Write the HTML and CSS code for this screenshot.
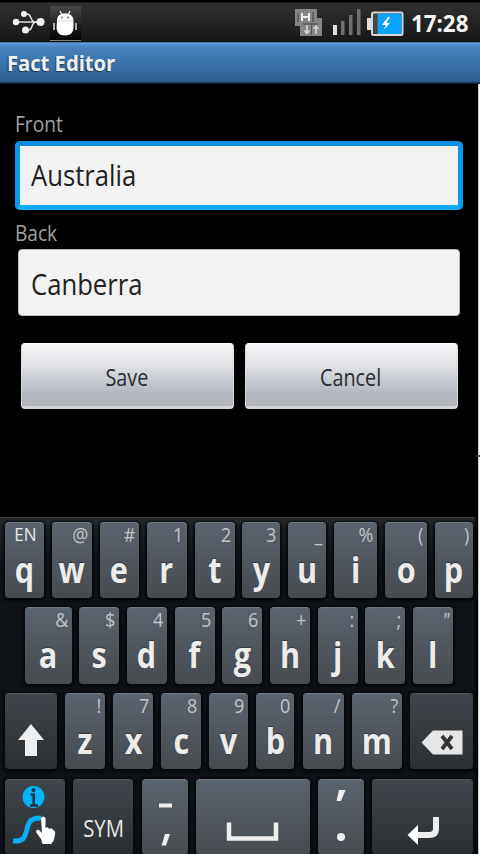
FILE: index.html
```html
<!DOCTYPE html>
<html lang="en">
<head>
<meta charset="utf-8">
<title>Fact Editor</title>
<link rel="stylesheet" href="styles.css">
</head>
<body>
<header class="status">
  <svg class="usb" width="34" height="26" viewBox="0 0 34 26">
    <g fill="none" stroke="#ddd" stroke-width="1.6"><path d="M4 13H30M13 5H16C21 5 18 10 23 13"/><path d="M14 21H18C22 21 20 13 25 13"/></g>
    <g fill="#f2f2f2"><circle cx="5" cy="13" r="3.2"/><circle cx="29.5" cy="13" r="4"/><circle cx="13" cy="5" r="3"/><circle cx="14.500" cy="21" r="3.500"/></g>
  </svg>
  <div class="debug">
    <svg width="30" height="32" viewBox="0 0 30 32">
      <g stroke="#eee" fill="#fff"><path d="M10 1L12 5M20 1L18 5" stroke-width="1.300"/><path d="M7 11C7 5.500 10 3.500 15 3.500S23.500 5.500 23.500 11V18Q23 25.500 15 25.500T6.500 18Z" stroke="none"/><path d="M4 13V20M26 13V20" stroke="#aaa" stroke-width="2"/></g>
      <path d="M7 11H23" stroke="#ddd"/><circle cx="12" cy="7.500" r="1" fill="#777"/><circle cx="18" cy="7.500" r="1" fill="#777"/>
    </svg>
  </div>
  <svg class="network" width="28" height="28" viewBox="0 0 28 28">
    <path d="M0 0H22V9H27V27H5V17H0Z" fill="#858585"/>
    <path d="M7 4V12M14 4V12M7 8H14" stroke="#eee" stroke-width="2"/>
    <path d="M3 4V13M18 3V13M8 15H23" stroke="#555" stroke-width="1.500"/>
    <path d="M12 16V24M9.500 21.500L12 24.500L14.500 21.500M21 25V17M18.500 20L21 17L23.500 20" fill="none" stroke="#d0d0d0" stroke-width="1.700"/>
    <path d="M16.500 15V26" stroke="#555"/>
  </svg>
  <svg class="signal" width="30" height="28" viewBox="0 0 30 28">
    <path d="M1 17H5V27H1Z" fill="#ddd"/><path d="M9 13H12.500V27H9ZM17 7H20.500V27H17ZM25 1H28.500V27H25Z" fill="#707070"/>
  </svg>
  <svg class="battery" width="37" height="26" viewBox="0 0 37 26">
    <path d="M0 7H5V19H0Z" fill="#ddd"/><rect x="5" y="1.500" width="30.500" height="22.500" rx="1.500" fill="#4a4440" stroke="#d5d5d5" stroke-width="2"/>
    <path d="M10.500 2.500H34.500V23H10.500Z" fill="#0aa3fb"/><path d="M21 6L15 14H19L16.500 19L23 12H19.500L23 6Z" fill="#fff"/>
  </svg>
  <span class="time">17:28</span>
</header>
<h1 class="title"><span>Fact Editor</span></h1>
<div class="screen">
  <div class="app">
    <main class="form">
      <div class="label"><span>Front</span></div>
      <div class="field focused"><span>Australia</span></div>
      <div class="label back"><span>Back</span></div>
      <div class="field"><span>Canberra</span></div>
      <div class="buttons"><button><span>Save</span></button><button><span>Cancel</span></button></div>
    </main>
    <div class="keyboard">
      <div class="row row1">
        <div class="key"><i class="lang">EN</i><b>q</b></div><div class="key"><i>@</i><b>w</b></div><div class="key"><i>#</i><b>e</b></div><div class="key"><i>1</i><b>r</b></div><div class="key"><i>2</i><b>t</b></div><div class="key"><i>3</i><b>y</b></div><div class="key"><i>_</i><b>u</b></div><div class="key"><i>%</i><b>i</b></div><div class="key"><i>(</i><b>o</b></div><div class="key"><i>)</i><b>p</b></div>
      </div>
      <div class="row row2">
        <div class="key"><i>&amp;</i><b>a</b></div><div class="key"><i>$</i><b>s</b></div><div class="key"><i>4</i><b>d</b></div><div class="key"><i>5</i><b>f</b></div><div class="key"><i>6</i><b>g</b></div><div class="key"><i>+</i><b>h</b></div><div class="key"><i>:</i><b>j</b></div><div class="key"><i>;</i><b>k</b></div><div class="key"><i class="quote">"</i><b>l</b></div>
      </div>
      <div class="row row3">
        <div class="key dark"><svg width="52" height="76" viewBox="0 0 52 76"><path d="M26 30L39 46H32V62H20V46H13Z" fill="#eee"/></svg></div>
        <div class="key"><i>!</i><b>z</b></div><div class="key"><i>7</i><b>x</b></div><div class="key"><i>8</i><b>c</b></div><div class="key"><i>9</i><b>v</b></div><div class="key"><i>0</i><b>b</b></div><div class="key"><i>/</i><b>n</b></div><div class="key"><i>?</i><b>m</b></div>
        <div class="key dark"><svg width="63" height="76" viewBox="0 0 63 76"><path d="M11.500 48.500L23 36.500H52.500V60.500H23Z" fill="#e6e6e6"/><path d="M32 42L42 55M42 42L32 55" stroke="#303438" stroke-width="3.800"/></svg></div>
      </div>
      <div class="row row4">
        <div class="key dark"><svg width="60" height="75" viewBox="0 0 60 75"><circle cx="28.500" cy="17" r="11" fill="#04b4f7"/><path d="M25.500 14.500H28.700V25M25 25.500H33" fill="none" stroke="#23313a" stroke-width="2.500"/><circle cx="28.500" cy="10" r="2" fill="#23313a"/><path d="M8 61C19 62 20 57 22 49S26 38 36 38" fill="none" stroke="#08aef2" stroke-width="5"/><path d="M36 38Q38 35 40.500 38V48Q43 46 44 49Q47 47 48 50Q52 50 48.500 61L46 64H37.500L36 59L31 52Q31 49 34 50L37 53Z" fill="#fff"/></svg></div>
        <div class="key dark sym"><span>SYM</span></div>
        <div class="key"><svg width="46" height="75" viewBox="0 0 46 75"><path d="M17 25.500H30" stroke="#eee" stroke-width="4"/><path d="M23 54H28L24 65.500H19.500Z" fill="#eee"/></svg></div>
        <div class="key"><svg width="114" height="75" viewBox="0 0 114 75"><path d="M33 42.500V58.500H80V42.500" fill="none" stroke="#eee" stroke-width="4.500"/></svg></div>
        <div class="key"><svg width="46" height="75" viewBox="0 0 46 75"><path d="M21 10H27.500L23 21H18.500Z" fill="#eee"/><circle cx="23" cy="57" r="4" fill="#eee"/></svg></div>
        <div class="key dark"><svg width="100" height="75" viewBox="0 0 100 75"><path d="M64 37V49Q64 55 57 55H45" fill="none" stroke="#eee" stroke-width="6"/><path d="M35.500 55L46 45V65Z" fill="#fff"/></svg></div>
      </div>
    </div>
  </div>
  <div class="edge"></div>
</div>
</body>
</html>
```
FILE: styles.css
```css
* { box-sizing: border-box; }
body { margin: 0; width: 480px; height: 854px; overflow: hidden; background: #000; font-family: "Open Sans", "Noto Sans", sans-serif; display: flex; flex-direction: column; }
svg { display: block; flex: none; }
.status { height: 42px; flex: none; display: flex; align-items: center; padding: 3px 0 0 11px; background: linear-gradient(#000 2px, #303030 3px, #171717 41px, #0c0c0c); }
.usb { margin-top: -2px; }
.debug { width: 31px; height: 35px; margin: 2px 0 0 5px; padding-top: 4px; border-bottom: 1px solid #777; background: linear-gradient(#494949, #111 75%, #050505); }
.network { margin: 0 0 0 214px; width: 28px; }
.signal { margin: -1px 0 0 9px; }
.battery { margin: 2px 0 0 5px; }
.time { font-size: 23px; font-weight: 700; line-height: 38px; color: #f4f4f4; margin: 1px 0 0 7px; transform: scaleX(.97); transform-origin: left; }
.title { margin: 0; height: 42px; flex: none; padding-left: 7px; background: linear-gradient(#285079, #5c9be0 1px, #4983be 5px, #3b75ad 20px, #2c5f94 39px, #17395b 41px, #000); color: #f0f0f0; font-size: 21px; font-weight: 700; line-height: 42px; text-shadow: -1px 1px 1px #26384b; }
.title span { display: block; transform: scaleX(.96); transform-origin: left; }
.screen { flex: 1; display: grid; grid-template-columns: 477px 3px; }
.edge { background: linear-gradient(transparent 371px, #555 371px, #555 373px, transparent 373px), linear-gradient(90deg, #000 .5px, #999 1px, #fff 2px); }
.app { display: flex; flex-direction: column; }
.form { height: 433px; padding: 23px 14px 0 15px; }
.label { height: 34px; color: #a0a0a0; font-size: 21px; line-height: 35px; }
.label span { display: block; transform: scaleX(.91); transform-origin: left; }
.label.back { height: 39px; line-height: 47px; }
.field { width: 442px; height: 67px; margin-left: 3px; padding-left: 12px; line-height: 68px; font-size: 29px; color: #222; background: #f2f2f2; border: 1px solid #bbb; border-radius: 4px; }
.field.focused { width: 448px; height: 69px; margin: 0; padding-left: 11px; line-height: 58px; border: 5px solid #0799ee; border-top-color: #0c8ddd; border-bottom-color: #12aafc; border-radius: 5px; }
.field span { display: block; transform: scaleX(.885); transform-origin: left; }
.buttons { display: flex; gap: 11px; margin: 27px 0 0 6px; width: 437px; }
button { flex: 1; height: 66px; padding: 3px 0 0; font: 23px "Open Sans", "Noto Sans", sans-serif; color: #282b2e; border: 1px solid #d8dade; border-top-color: #fff; border-bottom: 3px solid #d0d2d4; border-radius: 4px; background: linear-gradient(#f5f6f8, #dfe1e4 35%, #b4b9c2 78%, #b2b5b8); }
button span { display: inline-block; transform: scaleX(.86); position: relative; left: -1px; }
.keyboard { height: 337px; padding: 4px 0 0 5px; overflow: hidden; border-top: 1px solid #38383b; background: linear-gradient(#25282b, #101418 50px, #0e1116); border-right: 2px solid #050607; }
.row { display: grid; height: 76px; }
.row1 { grid-template-columns: 39px 40px 39px 40px 40px 38px 38px 43px 42px 38px; column-gap: 7.900px; }
.row2 { grid-template-columns: 47px repeat(8, 40px); column-gap: 7.700px; margin: 9px 0 0 19.500px; height: 77px; }
.row3 { grid-template-columns: 52px 40px 40px 40px 39px 38px 41px 50px 63px; column-gap: 8.100px; margin-top: 9px; }
.row4 { grid-template-columns: 60px 60px 46px 114px 46px 101px; column-gap: 8.300px; margin-top: 10px; }
.key { overflow: hidden; border-radius: 4px; background: linear-gradient(#5a646e, #50565e 50%, #474b50); border-top: 1px solid #707a82; box-shadow: 0 1px 3px 2px #06080b; display: flex; flex-direction: column; }
.key.dark { background: linear-gradient(#40464c, #2a2e31); border-top-color: #51575d; }
.key i { font-style: normal; font-size: 19.500px; line-height: 23px; height: 24px; color: #c2c4c6; text-align: right; padding-right: 4px; transform: scaleX(.92); transform-origin: right; }
.key i.lang { padding-right: 8px; color: #e8e8e8; font-size: 18.500px; line-height: 21px; }
.key i.quote { font-style: italic; }
.key b { align-self: center; font-size: 36.500px; font-weight: 700; line-height: 44px; color: #ececec; transform: scaleX(.84); text-shadow: 0 -1px 1px #34383c; }
.sym { align-items: center; }
.sym span { font-size: 24.500px; line-height: 32px; margin-top: 32px; color: #e8e8e8; transform: scaleX(.83); }
```
